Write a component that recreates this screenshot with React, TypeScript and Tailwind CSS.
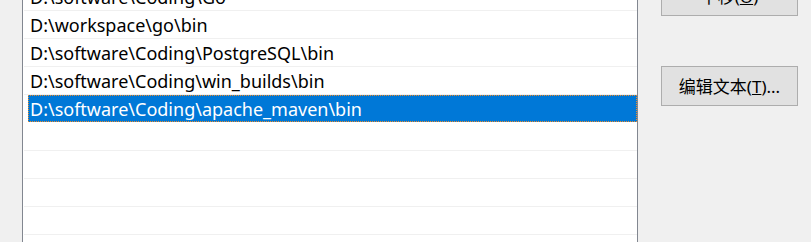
import React from "react";

const rows: string[] = [
  "D:\\software\\Coding\\Go",
  "D:\\workspace\\go\\bin",
  "D:\\software\\Coding\\PostgreSQL\\bin",
  "D:\\software\\Coding\\win_builds\\bin",
  "D:\\software\\Coding\\apache_maven\\bin",
  "",
  "",
  "",
  "",
  "",
];
const selected = 4;

export default function App() {
  return (
    <div
      className="h-[242px] w-[811px] overflow-hidden bg-[#f0f0f0] flex"
      style={{ fontFamily: '"Noto Sans", "Noto Sans CJK SC", sans-serif' }}
    >
      <div className="ml-[22px] mt-[-17px] w-[616px] h-[300px] bg-white border-l border-r border-[#828790] flex flex-col">
        {rows.map((r, i) => (
          <div
            key={i}
            className={
              "ml-[1px] h-[28px] shrink-0 flex " +
              (i === selected ? "border-b border-white" : "border-b border-[#f0f0f0]")
            }
          >
            <div
              className={
                "ml-[4px] flex-1 flex items-center pl-[2px] pt-[1px] text-[18px] leading-none whitespace-pre " +
                (i === selected
                  ? "bg-[#0078d7] text-white outline-1 outline-dotted outline-[#f08c28] -outline-offset-1"
                  : "text-black")
              }
            >
              {r}
            </div>
          </div>
        ))}
      </div>
      <div className="ml-[23px] mt-[-24px] flex flex-col gap-[50px]">
        <button className="w-[137px] h-[40px] bg-[#e1e1e1] border border-[#adadad] text-[17px] leading-none text-black flex items-center justify-center">
          下移(<span className="underline">O</span>)
        </button>
        <button className="w-[137px] h-[40px] bg-[#e1e1e1] border border-[#adadad] text-[17px] leading-none text-black flex items-center justify-center">
          编辑文本(<span className="underline">T</span>)...
        </button>
      </div>
    </div>
  );
}
